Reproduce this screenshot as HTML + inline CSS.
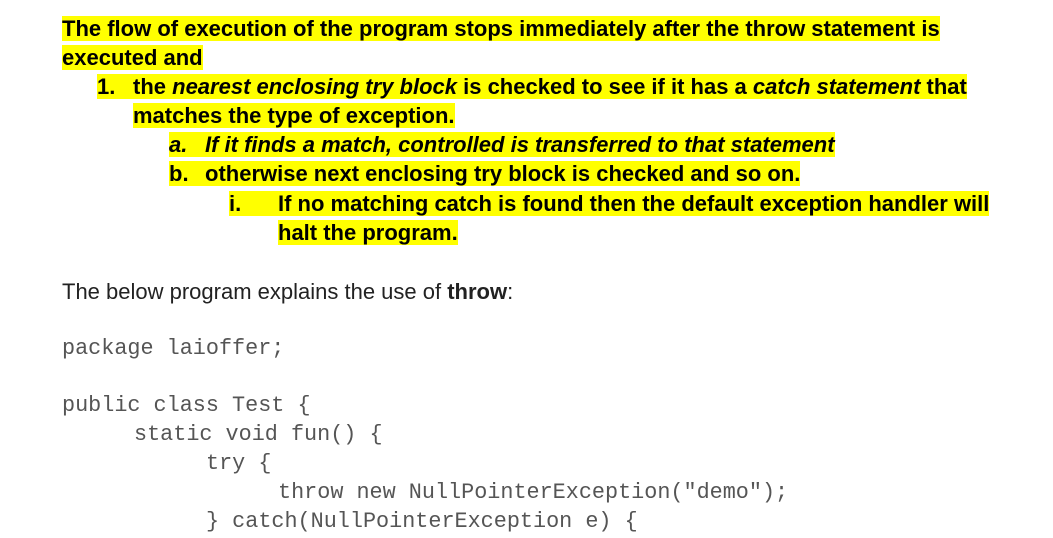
<!DOCTYPE html>
<html><head><meta charset="utf-8"><style>
body{margin:0;width:1053px;height:538px;background:#fff;overflow:hidden;position:relative;font-family:"Liberation Sans",Arial,sans-serif;}
.l{position:absolute;font-size:22px;font-weight:bold;color:#000;line-height:25px;white-space:nowrap;}
.l span{background:#ffff00;}
.m{display:inline-block;}
.c{position:absolute;font-family:"Liberation Mono","Courier New",monospace;font-size:21.8px;color:#555;white-space:pre;line-height:25px;}
</style></head><body>
<div class="l" style="left:62px;top:16px"><span>The flow of execution of the program stops immediately after the throw statement is</span></div>
<div class="l" style="left:62px;top:45px"><span>executed and</span></div>
<div class="l" style="left:97px;top:74px"><span><span class="m" style="width:36px">1.</span>the <i>nearest enclosing try block</i> is checked to see if it has a <i>catch statement</i> that</span></div>
<div class="l" style="left:133px;top:103px"><span>matches the type of exception.</span></div>
<div class="l" style="left:169px;top:132px"><span><i><span class="m" style="width:36px">a.</span>If it finds a match, controlled is transferred to that statement</i></span></div>
<div class="l" style="left:169px;top:161px"><span><span class="m" style="width:36px">b.</span>otherwise next enclosing try block is checked and so on.</span></div>
<div class="l" style="left:229px;top:191px"><span><span class="m" style="width:49px">i.</span>If no matching catch is found then the default exception handler will</span></div>
<div class="l" style="left:278px;top:220px"><span>halt the program.</span></div>
<div class="l" style="left:62px;top:279px;font-weight:normal;color:#222">The below program explains the use of <b>throw</b>:</div>
<div class="c" style="left:62px;top:336px">package laioffer;</div>
<div class="c" style="left:62px;top:393px">public class Test {</div>
<div class="c" style="left:134px;top:422px">static void fun() {</div>
<div class="c" style="left:206px;top:451px">try {</div>
<div class="c" style="left:278px;top:480px">throw new NullPointerException("demo");</div>
<div class="c" style="left:206px;top:509px">} catch(NullPointerException e) {</div>
</body></html>
